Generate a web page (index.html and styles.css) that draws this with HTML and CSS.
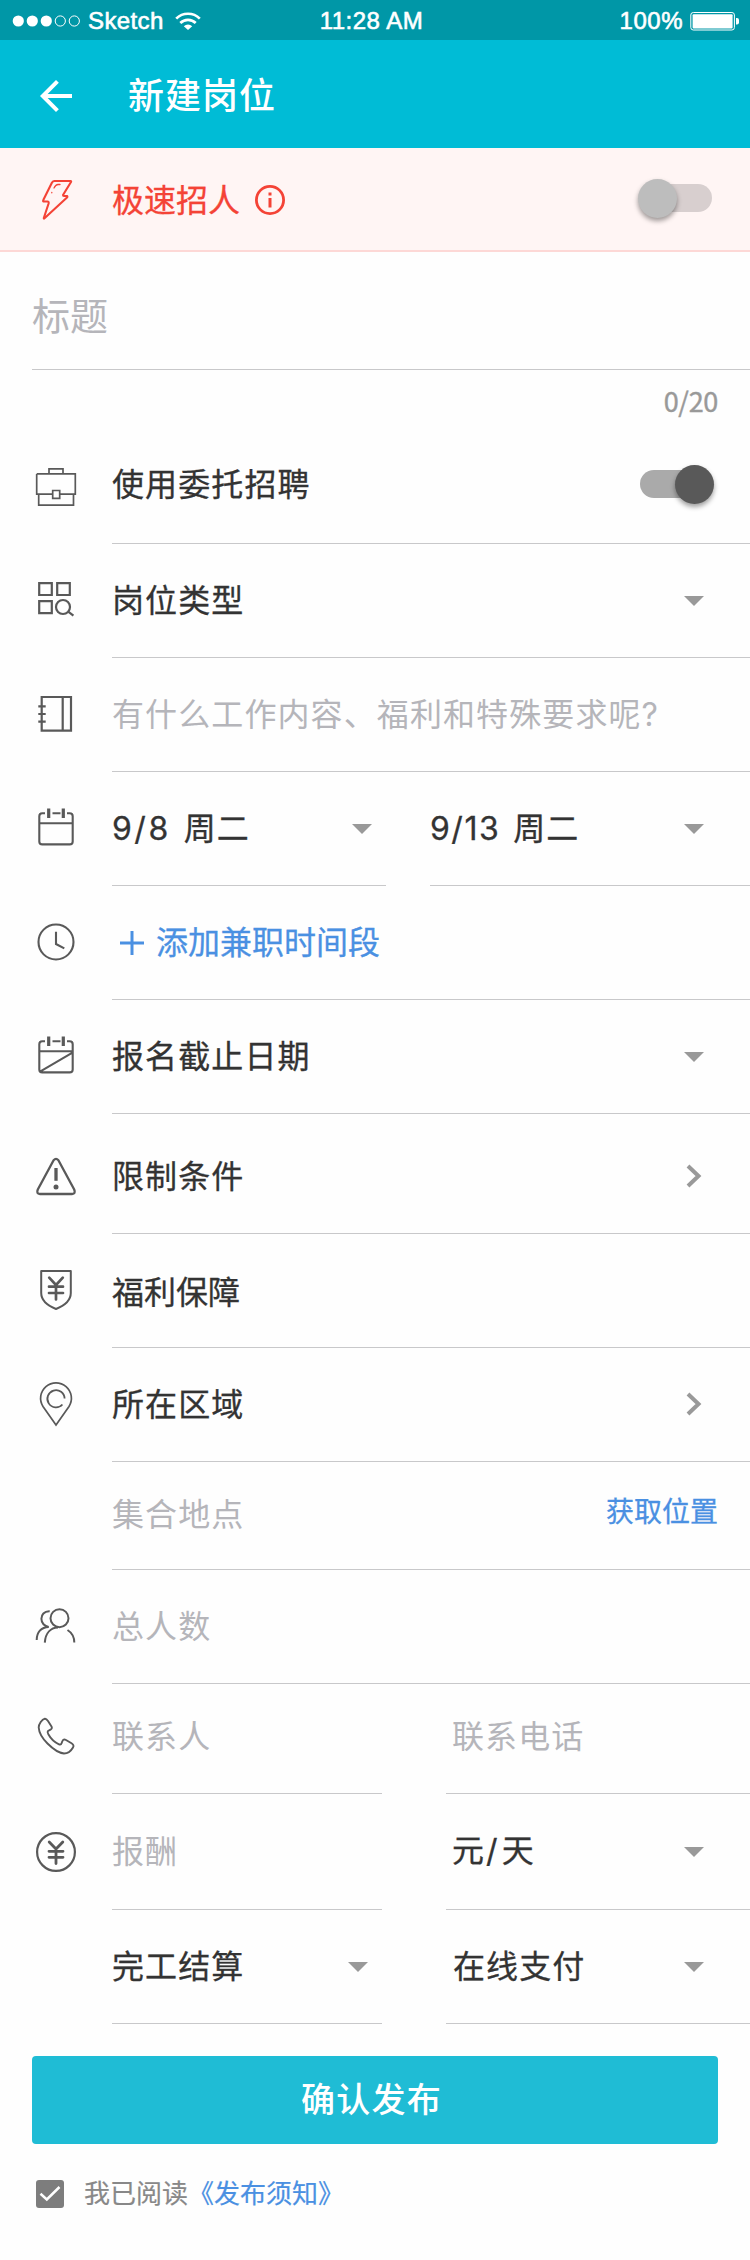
FILE: index.html
```html
<!DOCTYPE html>
<html lang="zh-CN">
<head>
<meta charset="utf-8">
<title>新建岗位</title>
<link rel="stylesheet" href="styles.css">
</head>
<body>
<div class="status">
  <div class="carrier">
    <svg width="70" height="14" viewBox="0 0 70 14"><g fill="#fff"><circle cx="6.3" cy="7" r="5.6"/><circle cx="20.3" cy="7" r="5.6"/><circle cx="34.3" cy="7" r="5.6"/></g><g fill="none" stroke="#fff"><circle cx="48.3" cy="7" r="5.1"/><circle cx="62.3" cy="7" r="5.1"/></g></svg>
    <span class="network">Sketch</span>
    <svg width="26" height="18" viewBox="0 0 26 18"><g fill="none" stroke="#fff" stroke-width="2.7"><path d="M1.2 6.6a16.8 16.8 0 0 1 23.6 0"/><path d="M5.3 11a11 11 0 0 1 15.4 0"/></g><path d="M8.8 14.2a6 6 0 0 1 8.4 0L13 18z" fill="#fff"/></svg>
  </div>
  <span class="time">11:28 AM</span>
  <div class="power"><span>100%</span>
    <svg width="50" height="20" viewBox="0 0 50 20"><rect x=".8" y="1.5" width="43.6" height="17.5" rx="2.5" fill="none" stroke="#fff"/><rect x="2.6" y="3.2" width="40" height="14.2" rx="1" fill="#fff"/><path d="M46 7h1q2 0 2 2v2.500q0 2-2 2h-1z" fill="#fff"/></svg>
  </div>
</div>
<header class="bar">
  <svg class="icon" viewBox="0 0 24 24" fill="#fff"><path d="M20 11H7.830l5.590-5.590L12 4l-8 8 8 8 1.410-1.410L7.830 13H20z"/></svg>
  <h1>新建岗位</h1>
</header>
<section class="urgent">
  <svg class="icon" viewBox="0 0 48 48" fill="none" stroke="#f44336" stroke-width="2.100" stroke-linejoin="round" stroke-linecap="round"><path d="M22.500 6H38.500Q39.500 6 39 7L31 20Q31 21 32 21H35Q35.800 21.500 35 22.500L12.500 43.300Q11.700 44 11.800 43L16.600 28.500Q17 26.500 15.500 26.500H11.500Q10.700 26 11.300 25L20 7.500Q21 6 22.500 6z"/><path d="M28 9.500H26Q23.800 9.500 22 13M19.800 17.500v.3" stroke-width="1.300"/></svg>
  <span class="urgent-text">极速招人</span>
  <svg class="info" width="30" height="30" viewBox="0 0 30 30"><circle cx="15" cy="15" r="13.600" fill="none" stroke="#f44336" stroke-width="2.800"/><path d="M13.500 7.500h3v3h-3zM13.500 13h3v9.500h-3z" fill="#f44336"/></svg>
  <div class="switch off"><i class="thumb"></i></div>
</section>
<main>
  <div class="title-field">标题</div>
  <div class="count">0/20</div>

  <div class="row delegate">
    <div class="lead"><svg class="icon line" viewBox="0 0 48 48" stroke-width="1.700"><path d="M4.700 13.900h38.600v20.300H27.700M20.700 34.200H4.700V13.900M17 13.900V8.900h14v5M6.700 34.200v11h34.800v-11"/><path d="M20.700 30.500h7v7.800h-7z"/></svg></div>
    <div class="field"><span class="text">使用委托招聘</span><div class="switch on"><i class="thumb"></i></div></div>
  </div>
  <div class="row">
    <div class="lead"><svg class="icon line" viewBox="0 0 48 48" stroke-width="2.200"><path d="M7.200 7.200h12.600v11.800H7.200zM25.200 7.200h12.600v11.800H25.200zM7.200 25.200h12.600v12H7.200z"/><circle cx="31" cy="31" r="7"/><path d="M36.200 35.600l5.200 4"/></svg></div>
    <div class="field"><span class="text">岗位类型</span><i class="caret"></i></div>
  </div>
  <div class="row">
    <div class="lead"><svg class="icon line" viewBox="0 0 48 48" stroke-width="2.200"><path d="M9.700 7h29.300v33.700H9.700zM30.700 7v33.700M6.300 16.300h7.400M6.300 24h7.400M6.300 31.700h7.400"/></svg></div>
    <div class="field"><span class="text hint low">有什么工作内容、福利和特殊要求呢<span class="latin">?</span></span></div>
  </div>
  <div class="row split-dates">
    <div class="lead"><svg class="icon line" viewBox="0 0 48 48" stroke-width="2.100"><path d="M13 9.300h-2.700q-3 0-3 3v25.100q0 3 3 3h27.400q3 0 3-3V12.300q0-3-3-3H35M20.500 9.300h8M7.300 19.300h33.400"/><path d="M16.700 4.500v9.600M31.300 4.500v9.600" stroke-width="3.200"/></svg></div>
    <div class="field half"><span class="text low"><span class="latin">9/8</span><span class="day">周二</span></span><i class="caret"></i></div>
    <div class="field last"><span class="text low"><span class="latin tight">9/13</span><span class="day">周二</span></span><i class="caret"></i></div>
  </div>
  <div class="row">
    <div class="lead"><svg class="icon line" viewBox="0 0 48 48" stroke-width="2.100"><circle cx="24" cy="24" r="17.500"/><path d="M24 13.700V26l8.300 4.400"/></svg></div>
    <div class="field"><svg class="plus" width="24" height="24" viewBox="0 0 24 24"><path d="M0 12h24M12 0v24" stroke="#4a90e2" stroke-width="3"/></svg><span class="text add">添加兼职时间段</span></div>
  </div>
  <div class="row">
    <div class="lead"><svg class="icon line" viewBox="0 0 48 48" stroke-width="2.100"><path d="M13 9.300h-2.700q-3 0-3 3v25.100q0 3 3 3h27.400q3 0 3-3V12.300q0-3-3-3H35M20.500 9.300h8M7.300 19.300h33.400M8 39.600l32.500-19"/><path d="M16.700 4.500v9.600M31.300 4.500v9.600" stroke-width="3.200"/></svg></div>
    <div class="field"><span class="text">报名截止日期</span><i class="caret"></i></div>
  </div>
  <div class="row limits">
    <div class="lead"><svg class="icon line" viewBox="0 0 48 48" stroke-width="2.300" stroke-linejoin="round"><path d="M21.600 8.200Q24 5.600 26.400 8.200L42.200 37.500Q44 41.800 40 42H8Q4 41.800 5.800 37.500z"/><path d="M24 16v12.800" stroke-width="3.300"/><circle cx="24" cy="35" r="2.500" fill="#595959" stroke="none"/></svg></div>
    <div class="field"><span class="text">限制条件</span><svg class="chevron" width="16" height="24" viewBox="0 0 16 24"><path d="M2 2l10.500 10L2 22"/></svg></div>
  </div>
  <div class="row welfare">
    <div class="lead"><svg class="icon line" viewBox="0 0 48 48" stroke-width="2" stroke-linejoin="round"><path d="M9.200 5h29.600v22Q38.800 37 24 43Q9.200 37 9.200 27z"/><path d="M17.200 11.700L24 19l6.800-7.300M24 19v14.500M17 20.700h14M17 27h14" stroke-width="2.700" stroke-linecap="round"/></svg></div>
    <div class="field"><span class="text plain">福利保障</span></div>
  </div>
  <div class="row">
    <div class="lead"><svg class="icon line" viewBox="0 0 48 48" stroke-width="1.700"><path d="M24 45L11 26.500A15.400 15.400 0 1 1 37 26.500z"/><path d="M32.600 18.600A8.600 8.600 0 1 0 30.400 24.500" stroke-width="1.800"/></svg></div>
    <div class="field"><span class="text">所在区域</span><svg class="chevron" width="16" height="24" viewBox="0 0 16 24"><path d="M2 2l10.500 10L2 22"/></svg></div>
  </div>
  <div class="row place">
    <div class="lead"></div>
    <div class="field"><span class="text hint">集合地点</span><a class="locate">获取位置</a></div>
  </div>
  <div class="row">
    <div class="lead"><svg class="icon line" viewBox="0 0 48 48" stroke-width="2"><circle cx="27.500" cy="16.200" r="9"/><path d="M17.700 9.300C12 9 9.400 13 9.400 16.700C9.400 21 12.500 24.500 16.800 24.900C9 25 4.700 30.500 4.700 38M12.800 40.600C13.500 30.500 19 25.700 26 25.500M35.500 28C39.500 30.500 42.300 35 42.300 40.600"/></svg></div>
    <div class="field"><span class="text hint">总人数</span></div>
  </div>
  <div class="row contact">
    <div class="lead"><svg class="icon line" viewBox="0 0 48 48" stroke-width="1.900" stroke-linejoin="round"><path d="M12.800 6.700C14 6.500 15 7.500 16 9L19.500 14.500Q20.600 16.500 18.500 17.600L16 19C15 20 15.700 21 16.500 22.500C19 27 23 30.500 27 32.300Q29 33 29.600 31.300L30.300 29.300Q31.500 26.800 34 28L39.500 31.300Q42.500 33.200 41 35.500C39 39 36 41.500 32 41.500C27 41 21 37 15.500 31.500C10.500 26.500 7 20.500 6.700 15.500C6.700 12 10 7.200 12.800 6.700z"/></svg></div>
    <div class="field half"><span class="text hint">联系人</span></div>
    <div class="field last"><span class="text hint">联系电话</span></div>
  </div>
  <div class="row pay">
    <div class="lead"><svg class="icon line" viewBox="0 0 48 48" stroke-width="2.200"><circle cx="24" cy="24" r="18.900"/><path d="M17.200 14L24 21l6.800-7M24 21v14.500M17 23.300h14M17 29.300h14" stroke-width="2.800" stroke-linecap="round" stroke-linejoin="round"/></svg></div>
    <div class="field half"><span class="text hint">报酬</span></div>
    <div class="field last"><span class="text">元<span class="latin slash">/</span>天</span><i class="caret"></i></div>
  </div>
  <div class="row settle">
    <div class="lead"></div>
    <div class="field half"><span class="text">完工结算</span><i class="caret"></i></div>
    <div class="field last"><span class="text">在线支付</span><i class="caret"></i></div>
  </div>
</main>
<button class="submit">确认发布</button>
<footer class="agree">
  <svg width="28" height="28" viewBox="0 0 28 28"><rect width="28" height="28" rx="3" fill="#7d7d7d"/><path d="M4.500 13.800l6.300 5.700L23.500 7" fill="none" stroke="#fff" stroke-width="2.500"/></svg>
  <span class="agree-text">我已阅读<a>《发布须知》</a></span>
</footer>
</body>
</html>
```
FILE: styles.css
```css
* { box-sizing: border-box; }
body {
  margin: 0;
  width: 750px;
  height: 2260px;
  background: #fefefe;
  color: #333;
  font-family: "Noto Sans CJK SC", sans-serif;
  font-size: 32px;
}
svg { display: block; flex: none; }
.icon { width: 48px; height: 48px; }
.line { fill: none; stroke: #595959; }

.status {
  display: grid;
  grid-template-columns: 1fr auto 1fr;
  align-items: center;
  height: 40px;
  padding: 1px 10px 0 12px;
  background: #0097a7;
  color: #fff;
  font: 24px/40px "Liberation Sans", sans-serif;
  -webkit-text-stroke: .6px #fff;
}
.carrier, .power { display: flex; align-items: center; }
.network { margin: 0 11px 0 6px; letter-spacing: .4px; }
.time { margin: 0 5px 0 -4px; letter-spacing: .5px; }
.power { justify-content: flex-end; gap: 7px; letter-spacing: .5px; }

.bar {
  display: flex;
  align-items: center;
  height: 108px;
  padding: 4px 32px 0;
  background: #00bcd6;
}
.bar h1 {
  margin: 0 0 0 48px;
  padding-bottom: 6px;
  color: #fff;
  font-size: 36px;
  font-weight: 500;
  line-height: 52px;
  letter-spacing: 1px;
}

.urgent {
  display: flex;
  align-items: center;
  height: 104px;
  padding: 0 38px 0 32px;
  background: #fff5f4;
  border-bottom: 2px solid #fdd8d6;
}
.urgent-text {
  margin: 0 15px 0 32px;
  padding-bottom: 2px;
  color: #f44336;
  line-height: 46px;
  -webkit-text-stroke: .3px;
}
.info { margin-top: 2px; }

.switch {
  display: flex;
  align-items: center;
  width: 72px;
  height: 28px;
  margin-left: auto;
  border-radius: 14px;
}
.thumb { width: 39px; height: 39px; border-radius: 50%; flex: none; box-shadow: 0 3px 5px rgba(0, 0, 0, .38); }
.off { background: #d8cfcf; margin-top: -2px; }
.off .thumb { background: #bdbdbd; margin-left: -2px; }
.on { background: #aaa; justify-content: flex-end; }
.on .thumb { background: #595959; margin-right: -2px; }

.title-field {
  height: 118px;
  margin-left: 32px;
  padding-top: 36px;
  border-bottom: 1px solid #c8c8ca;
  color: #b5b5ba;
  font-size: 38px;
  line-height: 52px;
}
.count {
  height: 56px;
  padding: 11px 32px 0 0;
  color: #999;
  font-size: 27px;
  line-height: 40px;
  text-align: right;
  letter-spacing: -.3px;
  -webkit-text-stroke: .4px;
}

.row { display: flex; height: 114px; }
.lead { display: flex; align-items: center; width: 112px; padding: 0 0 2px 32px; }
.field {
  display: flex;
  flex: 1;
  align-items: center;
  justify-content: space-between;
  padding: 0 46px 1px 0;
  border-bottom: 1px solid #c8c8ca;
}
.text {
  padding-bottom: 4px;
  line-height: 46px;
  letter-spacing: 1.1px;
  white-space: nowrap;
  -webkit-text-stroke: .3px;
}
.hint { color: #b5b5ba; -webkit-text-stroke: 0; }
.low { padding-bottom: 2px; }
.plain { letter-spacing: 0; }
.latin { font-family: Inter, sans-serif; letter-spacing: 2.500px; }
.tight { letter-spacing: 1.500px; }
.day { margin-left: 13px; }
.caret { width: 20px; height: 10px; margin-top: 2px; background: #999; clip-path: polygon(0 0, 100% 0, 50% 100%); }
.chevron { margin-right: 2px; fill: none; stroke: #999; stroke-width: 4; }
.half { flex: none; width: 270px; padding-right: 14px; }
.half + .last { margin-left: 64px; padding-left: 6px; }
.split-dates .half { width: 274px; }
.split-dates .last { margin-left: 44px; padding-left: 0; }

.delegate { height: 118px; }
.delegate .field { padding-right: 38px; }
.add { flex: 1; margin-left: 12px; color: #4a90e2; letter-spacing: 0; }
.plus { margin: 2px 0 0 8px; }
.limits { height: 120px; }
.limits .lead, .limits .field { padding-top: 6px; }
.welfare .text { padding-bottom: 0; }
.place { height: 108px; }
.place .field { padding: 0 32px 4px 0; }
.locate {
  padding-bottom: 8px;
  color: #4a90e2;
  font-size: 28px;
  line-height: 40px;
  -webkit-text-stroke: .3px;
}
.contact { height: 110px; }
.contact .lead, .contact .field { padding-bottom: 6px; }
.pay { height: 116px; }
.pay .lead { padding-bottom: 0; }
.slash { margin-left: 1px; letter-spacing: 4px; }
.settle .last { padding-left: 7px; }

.submit {
  display: block;
  width: 686px;
  height: 88px;
  margin: 32px 32px 0;
  padding: 0 7px 4px 0;
  border: 0;
  border-radius: 4px;
  background: #1fbcd5;
  color: #fff;
  font: 500 34px/50px "Noto Sans CJK SC", sans-serif;
  letter-spacing: 1.300px;
}
.agree { display: flex; align-items: center; margin: 28px 0 0 36px; gap: 20px; }
.agree-text { color: #888; font-size: 26px; line-height: 40px; padding-bottom: 3px; -webkit-text-stroke: .2px; }
.agree-text a { color: #4a90e2; }
```
